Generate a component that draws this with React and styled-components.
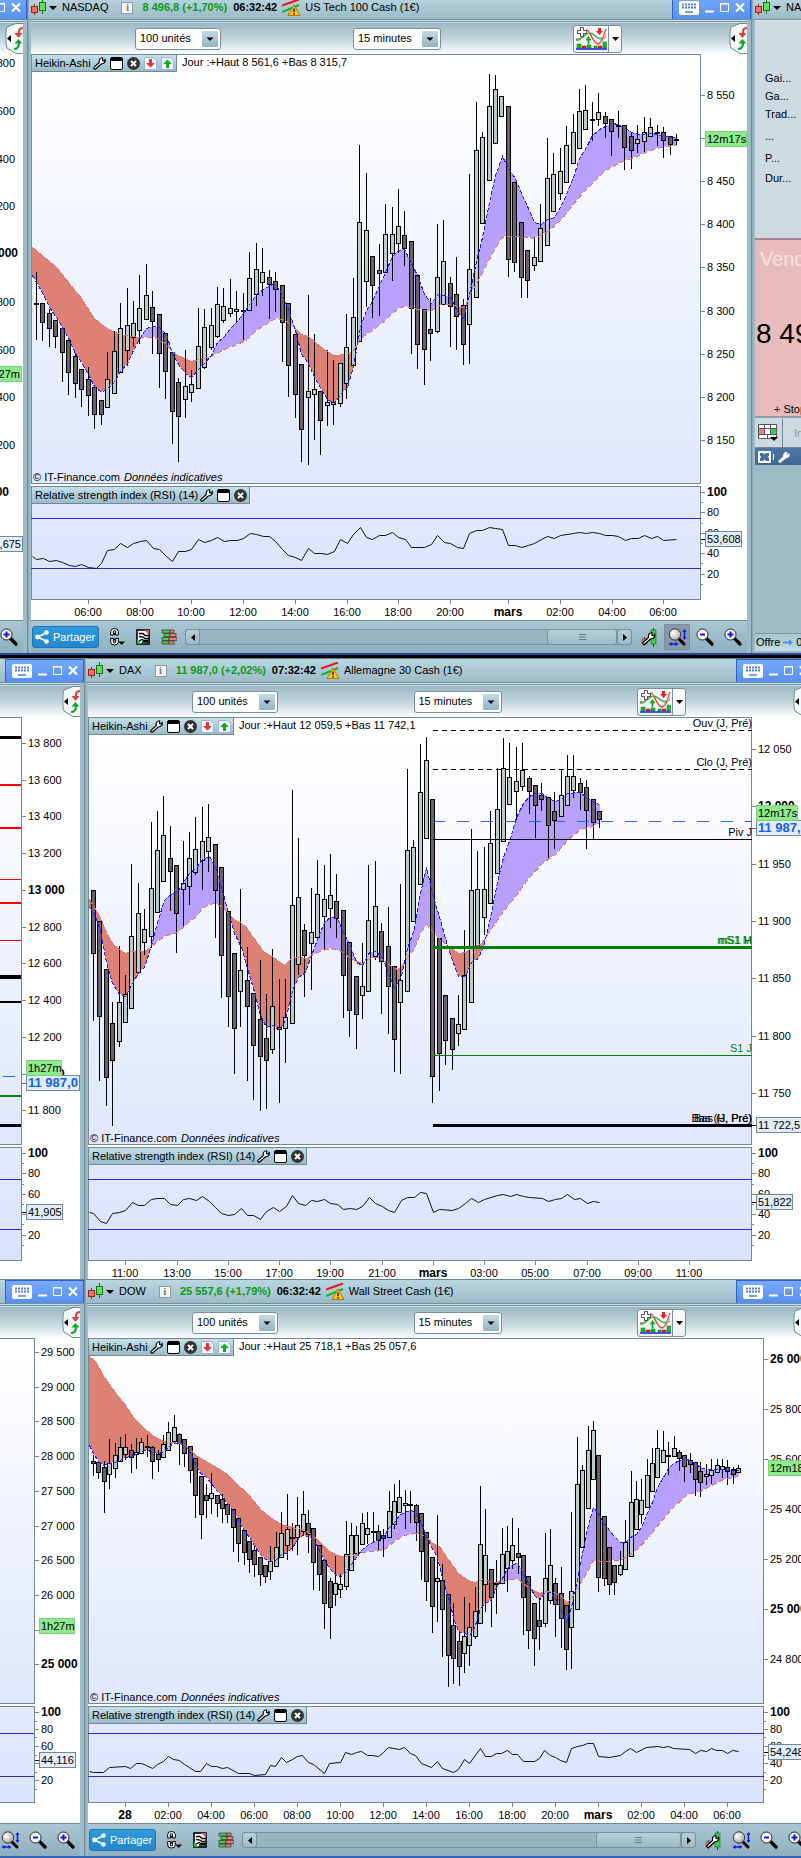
import React from 'react';
import styled, { createGlobalStyle, css } from 'styled-components';

const GlobalStyle = createGlobalStyle`
  *, *::before, *::after { box-sizing: border-box; }
  body { margin: 0; background: #fff; }
  body, button, select { font: 11px/13px "Liberation Sans", Arial, sans-serif; color: #000; }
  svg { display: block; flex: none; }
  svg text { font-family: "Liberation Sans", Arial, sans-serif; font-size: 11px; }
  svg text.major { font-size: 12px; font-weight: 700; }
`;

const c = {
  frame: '#728993',
  bar: '#9dbac7',
  barLight: '#b9d7e2',
  level: '#2a2ad6',
  up: '#bccac8',
  down: '#6b6069',
  cloudUp: '#b8a0ff',
  cloudDown: '#dc8174',
};

/* ---------- chart data: drawn in thirds of a pixel ---------- */

const nasdaq = {
  ux: 93, uy: -558, x0: 109, step: 19.394,
  candles: `d96 190 193 299|d190 190 247 302|d207 220 265 320|d240 241 290 322|d262 265 338 425|d301 301 398 464|d340 349 431 473|d388 388 448 500|d382 418 466 527|d436 442 523 566|d480 481 523 554|l337 418 502 503|l274 334 460 461|l190 265 398 398|l145 256 331 376|l184 250 293 318|l106 205 271 311|l73 166 238 239|d154 202 244 341|d223 223 340 443|d280 281 395 476|d337 337 514 611|d415 427 530 665|l331 438 479 533|l391 433 458 485|l205 319 445 446|l208 262 383 384|l205 256 323 328|l142 193 290 291|l145 199 242 248|l118 205 220 229|l154 208 214 244|d160 211 213 299|l37 115 211 212|l10 88 163 197|l25 97 127 166|d91 112 133 236|d97 124 148 215|d136 136 247 365|d190 190 376 470|d283 283 463 533|d373 373 568 665|l166 454 472 673|l283 448 463 599|d454 454 542 644|l331 487 497 557|l361 487 493 554|l370 370 490 500|l223 322 430 476|l115 232 376 377|l-285 -53 304 305|l-200 -28 124 200|d49 49 136 233|d13 91 101 226|l-107 -17 97 98|l-98 -17 40 122|l-152 -41 10 38|d-87 -14 25 76|d4 4 206 341|d106 106 314 386|d208 208 328 434|d175 268 280 362|l-48 112 275 276|l-60 64 193 194|d112 130 199 320|d52 163 230 329|d178 196 314 374|l-198 88 253 371|l-413 -269 172 173|l-324 -308 -50 -49|l-498 -401 -179 -178|l-495 -452 -290 -290|l-431 -431 -371 -371|d-401 -401 58 109|d-173 -173 67 95|d-53 -53 112 173|d31 31 121 173|l-8 52 76 92|l-108 -35 64 65|l-306 -185 16 17|l-261 -197 -86 -86|l-276 -206 -140 -123|l-342 -284 -173 -173|l-378 -323 -230 -230|l-451 -386 -275 -275|l-465 -389 -332 -332|d-414 -362 -359 -300|l-440 -383 -361 -344|d-384 -371 -350 -309|d-362 -362 -326 -255|d-387 -344 -341 -309|d-344 -344 -278 -213|d-321 -311 -269 -216|l-345 -302 -290 -264|l-369 -323 -296 -267|l-366 -338 -311 -311|d-345 -323 -320 -285|d-339 -323 -299 -249|d-312 -311 -287 -258|d-318 -302 -299 -288`,
  fast: '96,105 109,125 130,163 148,202 169,232 187,262 208,300 226,338 244,365 265,403 283,437 303,455 322,443 343,425 361,392 382,370 400,330 421,292 439,265 460,259 478,262 499,283 517,340 535,372 556,398 572,410 595,388 613,370 634,345 652,305 673,288 691,265 712,243 730,220 751,190 769,163 790,146 815,133 830,140 847,165 865,208 886,270 904,342 925,370 943,410 964,448 982,478 1003,490 1021,463 1042,440 1060,378 1081,262 1099,210 1117,184 1138,135 1156,95 1177,48 1195,30 1213,28 1234,70 1255,110 1273,163 1294,188 1315,162 1333,164 1351,172 1372,212 1390,236 1408,163 1429,62 1447,-10 1468,-115 1486,-195 1507,-253 1525,-215 1546,-185 1564,-140 1585,-95 1603,-55 1624,-47 1642,-63 1663,-70 1681,-100 1699,-137 1720,-190 1738,-245 1759,-280 1777,-315 1798,-332 1816,-341 1837,-350 1855,-348 1876,-335 1894,-325 1915,-317 1954,-320 1972,-317 1990,-311 2029,-308',
  slow: '96,22 130,48 169,82 208,128 244,175 283,233 304,253 330,270 361,281 390,289 421,290 460,290 478,297 499,313 517,335 545,352 572,363 595,356 634,347 673,328 712,313 740,297 769,270 800,250 826,234 847,236 865,245 886,265 904,281 925,288 943,303 964,320 1000,345 1042,343 1060,331 1081,294 1117,271 1156,240 1177,220 1195,205 1213,197 1240,203 1290,214 1320,192 1350,192 1380,202 1395,198 1408,165 1438,115 1470,52 1500,-3 1512,-13 1545,-12 1575,-8 1603,-6 1624,-17 1642,-28 1666,-45 1685,-65 1717,-106 1750,-145 1780,-175 1810,-205 1837,-222 1870,-236 1903,-250 1945,-268 1980,-278 2029,-286',
  rsiUy: 48,
  rsi: '96,258 109,267 130,265 148,273 169,271 187,276 208,285 226,289 244,283 265,291 287,293 304,280 322,241 343,238 361,220 382,232 400,218 421,214 439,211 460,235 478,238 499,258 517,273 535,244 556,243 574,238 595,208 613,217 634,209 652,202 673,213 691,211 712,211 730,203 751,188 769,193 790,198 808,197 826,214 847,236 865,256 886,262 904,271 925,235 943,250 964,250 982,253 1003,244 1021,208 1042,219 1060,193 1081,170 1099,202 1117,207 1138,196 1156,195 1177,187 1195,202 1216,208 1234,232 1255,230 1273,232 1294,223 1312,196 1333,216 1351,220 1372,232 1390,235 1408,190 1429,181 1447,181 1468,172 1486,175 1507,176 1525,226 1546,226 1564,232 1585,226 1603,219 1624,208 1642,197 1663,205 1681,196 1720,190 1738,187 1759,190 1777,187 1798,190 1816,196 1837,194 1855,199 1876,211 1894,205 1915,205 1933,196 1954,205 1972,199 1990,211 2029,208',
};

const dax = {
  ux: 264, uy: 51, x0: 280, step: 19.215,
  candles: `d571 571 760 962|d664 664 949 1142|d808 808 1132 1217|d906 970 1081 1277|l739 907 1024 1040|l826 883 967 968|l492 709 925 926|l549 640 817 818|l627 688 727 762|l366 565 709 742|l333 451 637 638|l288 406 544 545|d378 475 514 630|d496 496 640 756|l424 550 568 677|l397 475 559 612|l352 448 517 522|l321 424 481 567|l312 412 454 513|d433 433 571 713|d502 502 766 893|d634 634 889 980|d760 760 985 1121|l568 811 874 980|d742 841 919 1142|d880 880 1036 1199|d780 958 1069 1232|d883 1015 1081 1226|l748 919 1048 1061|d838 982 988 1208|l838 952 985 1088|l270 616 970 971|l414 592 793 824|d673 691 766 890|l564 697 730 869|l480 583 712 714|l495 598 649 745|l462 586 625 681|d522 604 655 713|d631 631 826 953|d727 727 931 1010|d829 829 943 1046|l730 859 886 956|l495 661 874 875|l484 619 769 779|d670 694 784 941|d622 739 859 1001|d799 799 1018 1115|l552 841 907 1121|l207 451 874 875|l420 442 664 665|l132 277 553 554|l111 181 415 416|d298 298 1129 1208|d715 715 1060 1172|d886 886 1021 1094|d955 955 1048 1109|l886 973 1000 1037|l690 826 988 988|l387 571 907 908|l453 568 738 739|l441 568 653 702|l333 430 610 611|l205 328 520 521|l114 205 424 425|l129 232 313 314|l141 244 274 357|l129 211 259 272|d228 235 274 341|d256 256 316 413|d249 286 298 332|d292 292 376 473|d276 334 361 446|l208 286 349 349|l165 229 316 317|l165 229 271 293|d234 250 277 329|d240 262 331 446|d298 298 367 418|d334 334 358 382`,
  fast: '267,620 280,632 301,690 319,785 337,850 358,882 376,888 397,850 415,820 433,800 454,735 472,665 493,600 511,583 532,577 550,545 568,518 589,500 607,478 628,468 646,500 664,560 685,635 703,700 724,740 742,805 760,865 781,945 799,982 820,975 838,990 856,960 877,870 895,832 916,815 934,765 952,718 973,665 991,652 1012,655 1030,695 1051,735 1069,785 1087,795 1108,755 1126,753 1147,770 1165,820 1183,865 1204,828 1222,745 1243,685 1261,580 1279,500 1300,590 1320,660 1340,735 1357,780 1375,828 1396,828 1414,785 1435,773 1453,730 1471,650 1492,545 1510,470 1531,415 1549,350 1570,310 1588,288 1606,280 1627,278 1645,295 1666,302 1684,297 1702,280 1741,277 1762,295 1780,305 1798,312',
  slow: '267,597 301,650 319,697 337,730 358,748 376,759 397,754 433,754 451,742 472,722 493,707 532,695 568,662 589,648 607,625 628,611 646,608 664,618 685,640 703,657 724,668 742,685 760,712 790,753 820,772 852,795 877,772 895,770 920,774 934,765 965,750 991,744 1015,749 1030,757 1051,775 1087,790 1108,775 1130,770 1147,778 1165,793 1190,807 1204,797 1222,770 1243,745 1261,700 1279,672 1300,695 1318,713 1340,735 1375,760 1396,757 1414,740 1440,733 1453,717 1471,690 1510,632 1549,585 1588,530 1627,490 1666,462 1702,420 1741,388 1780,378 1798,366',
  rsiUy: 51,
  rsi: '267,246 280,249 301,273 319,280 337,249 358,247 376,241 397,217 415,226 433,226 454,208 472,205 493,205 511,222 532,226 550,208 568,205 589,211 607,199 628,213 646,232 664,250 685,256 703,253 724,235 742,256 760,256 781,268 799,244 820,232 838,244 858,227 877,196 895,220 916,226 934,211 952,213 973,208 991,220 1012,223 1030,238 1051,235 1069,238 1087,229 1108,202 1126,220 1147,229 1165,241 1183,247 1204,211 1222,202 1243,202 1261,187 1279,190 1300,246 1318,238 1357,241 1375,235 1396,220 1414,205 1435,217 1453,208 1492,196 1510,193 1531,199 1549,193 1570,199 1588,202 1627,205 1645,214 1666,208 1684,203 1702,193 1723,208 1741,205 1762,220 1780,214 1798,217',
};

const dow = {
  ux: 264, uy: -6, x0: 280, step: 16.125,
  candles: `d346 364 370 405|d367 367 397 414|d363 382 424 516|l297 370 403 446|l309 346 385 411|l291 322 364 365|l282 322 343 358|d312 331 352 396|l294 337 343 384|l294 307 340 341|d285 319 322 350|d318 322 364 414|d330 343 358 393|l285 313 352 353|l246 277 331 332|l225 262 304 305|d280 283 310 372|d297 297 340 378|d319 319 391 426|d355 355 466 533|d409 409 523 594|d432 466 481 531|l399 460 475 519|d466 466 490 528|d463 478 505 548|d493 493 523 546|d507 508 562 635|d535 535 610 665|d570 571 637 674|d603 604 658 698|d618 631 673 710|d651 652 703 735|d675 676 709 726|l618 664 694 717|l576 622 679 680|l516 580 652 653|l462 568 616 659|d549 591 593 632|l471 556 592 643|l453 523 574 584|d510 550 583 636|d565 565 667 749|d615 616 703 752|d660 661 790 864|d714 724 802 896|l648 730 763 797|l702 733 748 773|l543 643 739 747|l549 586 691 692|l558 586 640 641|l519 550 613 614|l516 565 583 611|d516 573 577 602|d555 574 601 632|d567 586 595 650|l453 514 592 593|l432 484 553 566|l420 472 517 518|l450 490 496 564|d453 493 495 548|d493 495 547 602|d520 520 634 717|d577 577 724 780|d652 652 799 878|l525 715 724 843|d672 721 808 950|d763 763 946 1040|d789 856 955 1031|d873 904 979 1037|l771 889 940 998|l789 862 916 977|l741 814 889 896|l438 613 850 851|l507 646 733 815|d688 688 772 860|d660 729 731 821|l564 643 730 731|l558 634 685 755|l534 616 661 684|d564 640 652 701|d646 646 772 884|d709 709 871 926|d790 790 895 977|d774 841 859 929|l579 715 850 858|l567 676 781 791|d715 730 793 890|d682 760 835 923|d796 796 928 989|l516 754 862 986|l291 433 808 809|l375 391 622 623|l258 331 505 506|l243 271 418 419|d346 346 712 755|d529 529 715 737|d622 622 733 764|d676 676 727 764|l633 676 703 707|l540 607 688 689|l393 487 649 650|l423 478 568 569|l417 481 523 551|l357 406 502 503|l324 370 454 455|l270 325 412 413|l273 331 367 368|d306 346 349 404|l288 325 349 350|d330 337 355 392|d346 346 379 425|d339 361 373 398|d367 367 418 467|d366 394 427 470|l373 403 409 434|l357 391 406 431|l357 376 397 398|l357 379 388 411|d360 382 395 434|d383 388 403 431|l375 385 397 398`,
  fast: '267,316 280,340 295,363 310,375 328,370 343,367 361,360 376,350 391,348 409,342 424,334 439,330 457,334 472,338 490,335 505,320 520,310 538,310 553,314 568,330 586,372 601,400 619,412 634,430 649,450 667,468 682,490 697,508 715,540 730,568 748,590 763,615 778,640 796,658 811,664 826,660 844,643 859,638 877,620 892,600 907,585 925,587 940,600 955,625 973,660 988,685 1006,702 1021,711 1036,695 1054,672 1069,650 1084,630 1102,615 1117,605 1135,598 1150,590 1165,565 1183,545 1198,525 1213,515 1231,511 1246,515 1264,545 1279,585 1294,620 1312,650 1327,715 1345,770 1360,830 1375,874 1393,880 1408,886 1423,865 1441,805 1456,790 1474,778 1489,740 1504,720 1522,685 1537,672 1552,670 1570,700 1585,730 1603,765 1618,780 1633,760 1651,757 1666,775 1681,800 1699,842 1714,800 1732,720 1747,640 1762,565 1780,500 1795,518 1810,545 1828,570 1843,588 1861,605 1876,607 1891,590 1909,583 1924,560 1939,525 1957,485 1972,440 1990,410 2005,385 2020,368 2038,360 2060,357 2086,370 2101,382 2119,388 2149,388 2167,387 2182,390 2215,391',
  slow: '267,47 285,62 313,110 345,157 378,198 400,232 430,262 457,285 490,302 520,307 553,313 568,328 590,347 619,362 649,381 682,403 715,435 748,465 780,507 811,532 844,552 877,562 907,567 925,575 955,600 988,632 1021,649 1060,645 1084,635 1117,634 1150,630 1183,602 1213,586 1246,580 1279,588 1297,610 1320,620 1345,658 1375,700 1398,718 1423,727 1450,716 1480,725 1510,722 1537,716 1555,717 1585,740 1618,760 1635,752 1660,756 1681,765 1702,786 1714,775 1732,740 1747,720 1780,661 1810,662 1861,660 1885,645 1915,625 1945,590 1980,547 2020,502 2060,463 2100,452 2140,433 2170,417 2215,408',
  rsiUy: 98,
  rsi: '267,293 280,297 310,297 328,282 376,279 391,285 409,270 424,270 439,276 457,283 472,271 490,262 505,249 520,257 538,261 553,272 568,280 586,294 601,294 619,270 634,279 649,279 667,284 682,282 715,300 748,300 763,306 796,303 811,276 826,279 844,252 859,267 877,258 892,249 907,246 925,267 940,273 973,298 988,270 1021,267 1036,237 1054,243 1069,237 1084,234 1102,245 1117,244 1135,249 1150,237 1165,222 1198,226 1213,221 1231,240 1246,246 1264,270 1294,282 1312,262 1327,285 1360,297 1375,288 1393,258 1408,268 1441,223 1456,249 1474,249 1489,240 1504,240 1522,231 1537,243 1552,241 1570,264 1603,264 1618,255 1633,231 1651,246 1666,252 1681,261 1699,267 1714,225 1732,219 1747,216 1762,210 1780,210 1795,249 1828,252 1861,246 1876,234 1891,225 1909,235 1939,222 1972,219 1990,222 2005,219 2020,223 2068,227 2086,238 2101,231 2119,234 2134,225 2149,231 2167,229 2182,238 2197,231 2215,234',
};

/* ---------- window frames ---------- */

const Desktop = styled.main`
  display: flex;
  flex-direction: column;
  width: 100%;
  overflow: hidden;
`;

const Row = styled.section`
  display: flex;
  margin-top: ${(p) => (p.$cut ? '-5px' : 0)};
`;

const Taskline = styled.div`
  height: ${(p) => (p.$last ? 2 : 5)}px;
  background: ${(p) => (p.$last ? '#3563b8' : 'linear-gradient(#23479a 2px, #000 2px)')};
`;

const Splitter = styled.div`
  flex: none;
  width: 2px;
  background: linear-gradient(90deg, #6f8b98 1px, #8ea9b6 1px);
`;

const Frame = styled.article`
  display: flex;
  flex-direction: column;
  min-width: 0;
  position: relative;
  ${(p) => (p.$width ? css`flex: none; width: ${p.$width}px;` : css`flex: 1;`)}
  margin-right: ${(p) => (p.$runsOut ? '-14px' : 0)};
`;

const Body = styled.div`
  display: flex;
  flex-direction: column;
  flex: 1;
  background: #fff;
  border: solid ${c.bar};
  border-width: 0 4px 0 ${(p) => (p.$strip ? 0 : 2)}px;
`;

const TitleBar = styled.header`
  display: flex;
  align-items: center;
  height: 25px;
  overflow: hidden;
  white-space: nowrap;
  border-top: 1px solid #64808e;
  border-bottom: 1px solid #7490a0;
  padding-left: ${(p) => (p.$strip ? 0 : 2)}px;
  background: linear-gradient(${c.barLight}, ${c.bar});
`;

const StripControls = styled.div`
  display: flex;
  justify-content: flex-end;
  flex: 1;
  min-width: 0;
`;

const IconButton = styled.button`
  display: flex;
  align-items: center;
  justify-content: center;
  flex: none;
  padding: 0;
  border: 0;
  background: none;
  width: ${(p) => (p.$w ? `${p.$w}px` : 'auto')};
`;

const SymbolName = styled.h2`
  margin: 0 13px 0 4px;
  font-size: 11px;
  font-weight: 400;
`;

const InfoButton = styled.button`
  width: 12px;
  height: 12px;
  padding: 0;
  margin-right: 9px;
  border: 1px solid #8e9aa0;
  background: #f2f4f5;
  color: #7a8084;
  font: 700 11px/9px "Liberation Serif", serif;
`;

const Price = styled.strong`
  color: #0b9a1b;
  margin-right: 6px;
`;

const Clock = styled.time`
  font-weight: 700;
  margin-right: 5px;
`;

const FullName = styled.span`
  margin-left: 5px;
`;

const Controls = styled.div`
  display: flex;
  align-items: center;
  gap: 6px;
  flex: none;
  width: 79px;
  height: 24px;
  margin-left: auto;
  padding-left: 6px;
  border: 1px solid #2d62c6;
  background: linear-gradient(#75a9fc, #5890f0);
`;

const Groove = styled.div`
  height: 3px;
  background: linear-gradient(#c4dbe5 1px, #7e98a5 1px, #7e98a5 2px, #c4dbe5 2px);
`;

const Toolbar = styled.div`
  display: flex;
  justify-content: space-between;
  align-items: center;
  height: 31px;
  position: relative;
  padding: ${(p) => (p.$strip ? 0 : '0 125px 0 104px')};
  background: linear-gradient(#9bb8c4, #c6d7de 55%, #fbfdfd);
`;

const DrawerTab = styled.div`
  position: absolute;
  right: 0;
  top: 0;
`;

const SelectBox = styled.label`
  position: relative;
  width: ${(p) => p.$w}px;
  height: 22px;
  select {
    width: 100%;
    height: 22px;
    padding: 0 20px 0 4px;
    border: 1px solid #78909c;
    border-radius: 3px;
    background: #fff;
    appearance: none;
  }
  svg {
    position: absolute;
    top: 3px;
    right: 3px;
    pointer-events: none;
  }
`;

const SplitButton = styled.div`
  display: flex;
  width: 49px;
  height: 28px;
  border: 1px solid #78909c;
  border-radius: 3px;
  background: linear-gradient(#fff, #eef2f4);
  button + button { border-left: 1px solid #78909c; flex: 1; }
`;

/* ---------- chart frames ---------- */

const ChartLine = styled.div`
  display: flex;
  height: ${(p) => p.$h}px;
  margin-bottom: ${(p) => (p.$gap ? 2 : 0)}px;
`;

const Plot = styled.div`
  position: relative;
  flex: 1;
  min-width: 0;
  outline: 1px solid ${c.frame};
  outline-offset: -1px;
  background: ${(p) => (p.$rsi ? 'linear-gradient(#e3eafe, #dae3fd)' : 'linear-gradient(#fff 5%, #dfe7fd)')};
  > svg { position: absolute; inset: 0; }
`;

const StripPlot = styled.div`
  flex: none;
  width: ${(p) => p.$w}px;
  border: solid ${c.frame};
  border-width: ${(p) => (p.$w ? '1px 1px 1px 0' : 0)};
  background: ${(p) => (p.$rsi ? 'linear-gradient(#e3eafe, #dae3fd)' : 'linear-gradient(#fff 5%, #dfe7fd)')};
`;

const AxisBox = styled.div`
  flex: none;
  width: ${(p) => p.$w}px;
  overflow: hidden;
`;

const TimeLine = styled.div`
  height: ${(p) => p.$h}px;
  border-bottom: ${(p) => (p.$line ? `1px solid ${c.frame}` : 0)};
`;

const Chip = styled.div`
  position: absolute;
  top: 0;
  left: 0;
  display: flex;
  align-items: center;
  gap: 4px;
  height: 18px;
  padding: 0 2px 0 3px;
  white-space: nowrap;
  border: 1px solid ${c.frame};
  background: linear-gradient(#c3e0eb, #9cbbc8);
  span { margin-right: -2px; }
`;

const DayRange = styled.div`
  position: absolute;
  top: 2px;
  left: 151px;
  white-space: nowrap;
`;

const Credit = styled.div`
  position: absolute;
  left: 2px;
  bottom: 0;
  white-space: nowrap;
  em { margin-left: 4px; }
`;

/* ---------- bottom bar ---------- */

const BottomBar = styled.footer`
  display: flex;
  align-items: center;
  justify-content: ${(p) => (p.$strip ? 'flex-end' : 'flex-start')};
  gap: 11px;
  height: 32px;
  padding: 0 6px 0 1px;
  overflow: hidden;
  background: linear-gradient(#a9c7d3, #8fafbe);
`;

const ShareButton = styled.button`
  display: flex;
  align-items: center;
  gap: 4px;
  flex: none;
  width: 67px;
  height: 22px;
  padding: 0 2px;
  border: 1px solid #1b76b8;
  border-radius: 3px;
  background: linear-gradient(#2f9ade, #2287cd);
  color: #fff;
`;

const Scroller = styled.div`
  display: flex;
  flex: 1;
  min-width: 0;
  height: 16px;
  margin: 0 -3px;
  border: 1px solid #78939f;
  background: #97b5c1;
  border-radius: 3px;
`;

const ScrollTrack = styled.div`
  flex: 1;
`;

const ScrollButton = styled.button`
  display: flex;
  align-items: center;
  justify-content: center;
  flex: none;
  width: ${(p) => p.$w}px;
  padding: 0;
  border: 1px solid #78939f;
  border-radius: 3px;
  margin: -1px;
  margin-right: ${(p) => (p.$thumb ? '1px' : '-1px')};
  background: linear-gradient(#b5d0da, #9dbac6);
`;

const ToolButton = styled.button`
  display: flex;
  align-items: center;
  justify-content: center;
  flex: none;
  width: 26px;
  height: 26px;
  margin: 0 -5px 0 -4px;
  padding: 0;
  border: 1px solid ${(p) => (p.$on ? '#7d8f99' : 'transparent')};
  background: ${(p) => (p.$on ? '#8799a4' : 'none')};
`;

/* ---------- order panel ---------- */

const Panel = styled.aside`
  display: flex;
  flex-direction: column;
  flex: none;
  width: 48px;
  overflow: hidden;
  white-space: nowrap;
  background: ${c.bar};
`;

const PanelStats = styled.div`
  height: 218px;
  margin-left: 2px;
  padding: 51px 0 0 10px;
  background: #cddae1;
  border-top: 1px solid #e3ebef;
  p { margin: 0 0 5px; }
  p.gap { margin-top: 9px; }
  p.last { margin-top: 7px; }
`;

const SellBox = styled.div`
  display: flex;
  flex-direction: column;
  align-items: flex-start;
  height: 180px;
  margin-left: 2px;
  padding: 8px 0 0 1px;
  border-top: 2px solid #a8868c;
  border-bottom: 2px solid #8f9fa8;
  background: #e8bcbc;
  span { font-size: 20px; line-height: 22px; color: #f6e2e2; margin-left: 4px; }
  strong { font-weight: 400; font-size: 28px; line-height: 28px; margin-top: 50px; }
  small { font-size: 11px; line-height: 13px; margin: 55px 0 0 18px; }
`;

const PanelTools = styled.div`
  display: flex;
  align-items: center;
  height: 30px;
  margin-left: 2px;
  background: #cddae1;
  border-bottom: 1px solid ${c.frame};
  color: #8b979e;
  svg { margin: 0 4px 0 3px; }
  span { height: 28px; padding: 8px 0 0 11px; border-left: 1px solid ${c.frame}; }
`;

const PanelHead = styled.div`
  display: flex;
  align-items: center;
  gap: 4px;
  height: 17px;
  margin-left: 2px;
  padding-left: 3px;
  background: linear-gradient(#4d77a6, #3f6695);
`;

const Offer = styled.div`
  display: flex;
  align-items: center;
  gap: 3px;
  height: 18px;
  margin: auto 0 2px 2px;
  padding-left: 1px;
  background: linear-gradient(#a6c4d0, #c3dbe5);
  border-top: 1px solid #8199a5;
`;

/* ---------- icons ---------- */

const CandleIcon = () => (
  <svg width="16" height="17" viewBox="0 0 16 17">
    <path d="M3.500 5v11" stroke="#a02020" />
    <rect x="0.500" y="7.500" width="6" height="6" fill="#ee6f6f" stroke="#a02020" />
    <path d="M11.500 0v15" stroke="#0a7a14" />
    <rect x="8.500" y="3.500" width="6" height="8" fill="#66dd55" stroke="#0a7a14" />
  </svg>
);
const Caret = ({ w = 7 }) => (
  <svg width={w} height="4" viewBox="0 0 8 4" preserveAspectRatio="none"><path d="M0 0h8L4 4z" /></svg>
);
const WarnIcon = () => (
  <svg width="18" height="17" viewBox="0 0 18 17">
    <path d="M0 6.500L17 0.500" stroke="#f01414" strokeWidth="2" />
    <path d="M0 13L17 6" stroke="#12b32a" strokeWidth="2" />
    <path d="M12 6l6 10.500H6z" fill="#ffc524" stroke="#b07800" strokeLinejoin="round" />
    <path d="M12 9.500v3.500M12 14v1.500" stroke="#3b2a00" strokeWidth="1.600" />
  </svg>
);
const KeyboardIcon = () => (
  <svg width="20" height="14" viewBox="0 0 20 14">
    <rect width="20" height="14" rx="2" fill="#fff" />
    <path d="M3 3.500h14M3 6.500h14" stroke="#4a7fe0" strokeWidth="2" strokeDasharray="2 1" />
    <path d="M6 11h8" stroke="#4a7fe0" strokeWidth="1.500" />
  </svg>
);
const MinIcon = () => <svg width="9" height="11"><path d="M0 9.500h9" stroke="#fff" strokeWidth="2" /></svg>;
const MaxIcon = () => (
  <svg width="9" height="11"><path d="M.5 1.500h8v8h-8zM0 2h9" fill="none" stroke="#fff" /></svg>
);
const CloseIcon = () => (
  <svg width="10" height="11"><path d="M1 1.500l8 8M9 1.500l-8 8" stroke="#fff" strokeWidth="2" /></svg>
);
const TabIcon = () => (
  <svg width="18" height="31" viewBox="0 0 18 31">
    <path d="M18 .5H11L2 4C.5 8 .5 22 2 25l9 5.500h7" fill="#f4f8fa" stroke="#728993" />
    <path d="M6 12v7l-4-3.500z" />
    <path d="M18 5c-4 0-4 2-4 6" fill="none" stroke="#e24040" strokeWidth="2.200" />
    <path d="M9.500 10h8L13.500 15z" fill="#e24040" />
    <path d="M9 26c4 0 5-2 5-6" fill="none" stroke="#11a522" strokeWidth="2.200" />
    <path d="M9.500 20.500h8L13.500 16z" fill="#11a522" />
  </svg>
);
const ArrowBox = () => (
  <svg width="16" height="16" viewBox="0 0 16 16">
    <defs>
      <linearGradient id="arrowBox" x1="0" y1="0" x2="0" y2="1">
        <stop offset="0" stopColor="#c0dce6" /><stop offset="1" stopColor="#94b3c0" />
      </linearGradient>
    </defs>
    <rect width="16" height="16" rx="1" fill="url(#arrowBox)" />
    <path d="M4.500 6.500h7L8 10z" />
  </svg>
);
const IndicatorIcon = () => (
  <svg width="32" height="23" viewBox="0 0 32 23">
    <path d="M1 12C6 14 8 8 12 3c4 2 6 14 11 14 4-1 6-8 8-15" fill="none" stroke="#d9403c" strokeWidth="1.500" />
    <path d="M1 13c6 1 8-7 14-7 6 1 7 9 16 4" fill="none" stroke="#3cb34a" strokeWidth="1.500" />
    <path d="M12 3C8 8 6 14 1 13c6 0 8-8 14-7zM23 17c4-1 6-8 8-15v8c-4 2-5 4-8 7z" fill="#f5b5b0" />
    <path d="M5.500.5h3v3h3v3h-3v3h-3v-3h-3v-3h3z" fill="#fff" stroke="#4a4f53" />
    <path d="M13 17v-4h-2l2.500-3.500L16 13h-2v4z" fill="#0dbb18" stroke="#0a8c12" strokeWidth=".6" />
    <path d="M23 1h3v3h2l-3.500 4L21 4h2z" fill="#ee2222" />
    <path d="M2 17h4v4H2zM12 18h4v3h-4zM19 19h3v2h-3zM28 15h3.500v6H28z" fill="#0fbe1e" stroke="#0a6f10" strokeWidth=".5" />
    <path d="M7 19h4v2H7zM23 19h4v2h-4z" fill="#e32a2a" stroke="#801010" strokeWidth=".5" />
    <path d="M1 22h31" stroke="#1b1be0" strokeWidth="1.500" />
  </svg>
);
const WrenchPath = ({ fill = '#fff', stroke = '#000' }) => (
  <path
    d="M1 11.500L6.500 6.500C6 3.500 7.500 1.500 10 1.500v3l2.500.5V3c1 2.500-.5 5-4 5L3 13c-1 1-3-.5-2-1.500z"
    fill={fill} stroke={stroke} strokeWidth="1.200" strokeLinejoin="round"
  />
);
const WrenchIcon = () => <svg width="13" height="14" viewBox="0 0 13.500 14"><WrenchPath /></svg>;
const WindowIcon = () => (
  <svg width="13" height="13"><rect x=".5" y=".5" width="12" height="12" rx="1.500" fill="#fff" stroke="#000" /><path d="M1 1h11v3H1z" /></svg>
);
const DiscCloseIcon = () => (
  <svg width="13" height="13" viewBox="0 0 13 13">
    <circle cx="6.500" cy="6.500" r="6.500" fill="#333" />
    <path d="M4 4l5 5M9 4L4 9" stroke="#fff" strokeWidth="2" />
  </svg>
);
const PageArrow = ({ down }) => (
  <svg width="13" height="13" viewBox="0 0 13 13">
    <path d="M.5.5h9l3 3v9H.5z" fill="#f3f7fd" stroke="#9eb4cc" />
    <path
      d={down ? 'M5 2h3v4h3l-4.500 4.500L2 6h3z' : 'M5 11h3V7h3L6.500 2.500 2 7h3z'}
      fill={down ? '#e53535' : '#12ad1c'}
    />
  </svg>
);
const ShareIcon = () => (
  <svg width="14" height="14" viewBox="0 0 14 14">
    <path d="M12 2.500L2.500 7l9.500 4.500" fill="none" stroke="#fff" strokeWidth="1.500" />
    <circle cx="11.500" cy="2.500" r="2.300" fill="#fff" /><circle cx="2.500" cy="7" r="2.400" fill="#fff" /><circle cx="11.500" cy="11.500" r="2.300" fill="#fff" />
  </svg>
);
const ChainIcon = () => (
  <svg width="15" height="18" viewBox="0 0 15 18">
    <path d="M.7 7V3.500a3.800 3 0 017.600 0V7H5.700V3.800a1.200 1.200 0 00-2.400 0V7z" fill="#fff" stroke="#000" />
    <path d="M.7 10.500v3.500a3.800 3 0 007.600 0v-3.500H5.700v3.200a1.200 1.200 0 01-2.400 0v-3.200z" fill="#fff" stroke="#000" />
    <path d="M4.500 5v2M4.500 10.500v2" stroke="#000" />
    <path d="M8.500 13.500H15L11.700 17z" />
  </svg>
);
const NotesIcon = () => (
  <svg width="14" height="16" viewBox="0 0 14 16">
    <rect x="1" y="1" width="12" height="14" fill="#fff" stroke="#000" strokeWidth="1.600" />
    <path d="M8 1h5v5z" fill="#e45b5b" /><path d="M1 15v-5l5 5z" fill="#34b43c" />
    <path d="M3 4.500h4l2 2h3M3 7.500l4 .5 2 1.500h3M3 12l3-1.500 2 1h4M6 13h6" stroke="#000" fill="none" strokeWidth="1.300" />
  </svg>
);
const BookIcon = () => (
  <svg width="16" height="16" viewBox="0 0 16 16">
    <g stroke="#4d3a35" strokeWidth=".8">
      <path d="M1 1h8v3H1zM3 4.500h6v3H3zM1 8.500h7v3H1zM1 12h7v3H1z" fill="#43cf4b" />
      <path d="M9 1h4v3H9zM9 4.500h6v3H9zM8 8.500h8v3H8zM8 12h5v3H8z" fill="#ee7b78" />
    </g>
  </svg>
);
const ArrowLeft = ({ right }) => (
  <svg width="4" height="7"><path d={right ? 'M0 0v7l4-3.500z' : 'M4 0v7L0 3.500z'} /></svg>
);
const GripIcon = () => <svg width="7" height="6"><path d="M0 .5h7M0 3h7M0 5.500h7" stroke="#64808d" /></svg>;
const ChartToolIcon = () => (
  <svg width="16" height="19" viewBox="0 0 16 19">
    <path d="M3.500 9v9M12.500 0v19" stroke="#333" /><rect x="1" y="11" width="5" height="5" fill="#ef7f78" stroke="#444" strokeWidth=".6" />
    <rect x="10" y="2" width="5" height="14" fill="#3fce44" stroke="#0a6c10" strokeWidth=".6" />
    <g transform="translate(1 3)"><WrenchPath /></g>
  </svg>
);
const Lens = ({ children }) => (
  <svg width="18" height="18" viewBox="0 0 18 18">
    <path d="M10 10l6 6" stroke="#000" strokeWidth="3.200" strokeLinecap="round" />
    <circle cx="6.500" cy="6.500" r="5.500" fill="#f4f6fb" stroke="#222" />
    {children}
  </svg>
);
const FitIcon = () => (
  <svg width="19" height="19" viewBox="0 0 19 19">
    <defs>
      <radialGradient id="lens" cx=".35" cy=".35" r=".8"><stop offset="0" stopColor="#fff" /><stop offset="1" stopColor="#9a9a9a" /></radialGradient>
    </defs>
    <path d="M10 10l6 6" stroke="#000" strokeWidth="3" strokeLinecap="round" />
    <circle cx="7" cy="6.500" r="5.700" fill="url(#lens)" stroke="#333" />
    <path d="M16.500 2v8M3 16h5" stroke="#1414f0" strokeWidth="1.500" />
    <path d="M14.500 4l2-3 2 3zM14.500 9l2 3 2-3zM3.500 14v4L.5 16zM7.500 14v4l3-2z" fill="#1414f0" />
  </svg>
);

/* ---------- chart drawing ---------- */

const points = (text) => text.split(' ').map((p) => p.split(',').map(Number));

function project(text, ux, uy) {
  return points(text).map(([x, y]) => [Math.round((x - ux) / 3), Math.round((y - uy) / 3)]);
}

function valueAt(line, x) {
  const i = line.findIndex((p) => p[0] >= x);
  if (i <= 0) return line[i === 0 ? 0 : line.length - 1][1];
  const [x1, y1] = line[i - 1];
  const [x2, y2] = line[i];
  return y1 + ((y2 - y1) * (x - x1)) / (x2 - x1);
}

function cloud(fast, slow) {
  let up = '';
  let down = '';
  const end = fast[fast.length - 1][0];
  for (let x = 1; x <= end; x += 1) {
    const a = Math.round(valueAt(fast, x));
    const b = Math.round(valueAt(slow, x));
    if (a < b) up += `M${x + 0.5} ${a}V${b}`;
    if (a > b) down += `M${x + 0.5} ${b}V${a}`;
  }
  return { up, down };
}

const poly = (line) => line.map(([x, y]) => `${x + 0.5},${y + 0.5}`).join(' ');

function PriceDrawing({ data, levels }) {
  const fast = project(data.fast, data.ux, data.uy);
  const slow = project(data.slow, data.ux, data.uy);
  const fill = cloud(fast, slow);
  const py = (v) => Math.round((v - 1 - data.uy) / 3);
  return (
    <svg width="100%" height="100%" shapeRendering="crispEdges" aria-hidden="true">
      <path d={fill.up} stroke={c.cloudUp} />
      <path d={fill.down} stroke={c.cloudDown} />
      {data.candles.split('|').map((entry, i) => {
        const [h, t, b, l] = entry.slice(1).split(' ').map(Number).map(py);
        const x = Math.round((data.x0 + i * data.step - 1 - data.ux) / 3);
        return (
          <g key={i}>
            <rect x={x} y={h} width="1" height={l - h + 1} />
            <rect x={x - 2} y={t} width="5" height={Math.max(b - t + 1, 2)} />
            {b - t > 1 && (
              <rect x={x - 1} y={t + 1} width="3" height={b - t - 1} fill={entry[0] === 'l' ? c.up : c.down} />
            )}
          </g>
        );
      })}
      <polyline points={poly(slow)} fill="none" stroke="#e2736c" strokeDasharray="5 3" />
      <polyline points={poly(fast)} fill="none" stroke="#1c1cff" strokeDasharray="4 2" />
      {levels.map((v) => (
        <React.Fragment key={v.y}>
          <line x1="345" x2="100%" y1={v.y + 0.5} y2={v.y + 0.5} stroke={v.color || '#000'} strokeWidth={v.w || 1} strokeDasharray={v.dash} />
          {(v.names || []).map((n) => (
            <text key={n} x="100%" y={v.y - 3} textAnchor="end" fill={v.color || '#000'}>{n}</text>
          ))}
        </React.Fragment>
      ))}
    </svg>
  );
}

function RsiDrawing({ data, levels }) {
  return (
    <svg width="100%" height="100%" aria-hidden="true">
      {levels.map((y) => <line key={y} x1="0" x2="100%" y1={y + 0.5} y2={y + 0.5} stroke={c.level} />)}
      {data && <polyline points={poly(project(data.rsi, data.ux, data.rsiUy))} fill="none" stroke="#111" />}
    </svg>
  );
}

/* ticks: [y, label, major]; tags: {y, text, kind, w}; end: right edge for right-aligned labels */
function Axis({ ticks, minor = [], tags = [], end }) {
  return (
    <svg width="100%" height="100%">
      {!end && minor.map((y) => <path key={y} d={`M0 ${y + 0.5}h2`} stroke={c.frame} />)}
      {ticks.map(([y, label, major]) => (
        <React.Fragment key={y}>
          {!end && <path d={`M0 ${y + 0.5}h4`} stroke={c.frame} />}
          <text x={end ? (major ? end + 3 : end) : 6} y={y + 4} textAnchor={end ? 'end' : 'start'} className={major ? 'major' : undefined}>{label}</text>
        </React.Fragment>
      ))}
      {tags.map((t) => {
        const live = t.kind === 'live';
        const blue = t.kind === 'price';
        const x = t.x === undefined ? 4 : t.x;
        return (
          <React.Fragment key={t.text}>
            {!live && x > 0 && <path d={`M0 ${t.y + 8.5}h4`} stroke={blue ? '#1a6cf0' : '#000'} />}
            <rect x={x + 0.5} y={t.y + 0.5} width={t.w - 1} height="15" fill={live ? '#8fea8d' : '#e3ecf9'} stroke={live ? '#79d477' : c.frame} />
            <text
              x={end ? x + t.w - 2 : x + 2} y={t.y + 12} textAnchor={end ? 'end' : 'start'}
              style={blue ? { fontSize: 13, fontWeight: 700, fill: '#0f62f2' } : undefined}
            >{t.text}</text>
          </React.Fragment>
        );
      })}
    </svg>
  );
}

function TimeAxis({ ticks }) {
  return (
    <svg width="100%" height="100%">
      {ticks.map(([x, label, major]) => (
        <React.Fragment key={x}>
          <path d={`M${x + 0.5} 0v4`} stroke={c.frame} />
          <text x={x} y="16" textAnchor="middle" className={major ? 'major' : undefined}>{label}</text>
        </React.Fragment>
      ))}
    </svg>
  );
}

/* ---------- shared parts ---------- */

const WindowControls = () => (
  <Controls>
    <IconButton aria-label="Clavier" $w={20}><KeyboardIcon /></IconButton>
    <IconButton aria-label="Réduire" $w={9}><MinIcon /></IconButton>
    <IconButton aria-label="Agrandir" $w={9}><MaxIcon /></IconButton>
    <IconButton aria-label="Fermer" $w={10}><CloseIcon /></IconButton>
  </Controls>
);

const Drawer = () => (
  <DrawerTab><IconButton aria-label="Ouvrir le volet"><TabIcon /></IconButton></DrawerTab>
);

const Choice = ({ label, value, w }) => (
  <SelectBox $w={w}>
    <select aria-label={label} defaultValue={value}><option>{value}</option></select>
    <ArrowBox />
  </SelectBox>
);

const ChipTools = ({ pages }) => (
  <>
    <IconButton aria-label="Configurer"><WrenchIcon /></IconButton>
    <IconButton aria-label="Fenêtre"><WindowIcon /></IconButton>
    <IconButton aria-label="Supprimer"><DiscCloseIcon /></IconButton>
    {pages && <IconButton aria-label="Descendre"><PageArrow down /></IconButton>}
    {pages && <IconButton aria-label="Monter"><PageArrow /></IconButton>}
  </>
);

const ZoomTools = ({ on }) => (
  <>
    <ToolButton aria-label="Ajuster" $on={on}><FitIcon /></ToolButton>
    <ToolButton aria-label="Dézoomer"><Lens><path d="M4 6.500h5" stroke="#1414f0" strokeWidth="2" /></Lens></ToolButton>
    <ToolButton aria-label="Zoomer"><Lens><path d="M3.500 6.500h6M6.500 3.500v6" stroke="#1414f0" strokeWidth="2" /></Lens></ToolButton>
  </>
);

function ChartWindow({ w }) {
  return (
    <Frame $runsOut={w.runsOut}>
      <TitleBar>
        <CandleIcon />
        <IconButton aria-label="Choisir une valeur" $w={11}><Caret w={8} /></IconButton>
        <SymbolName>{w.symbol}</SymbolName>
        <InfoButton aria-label="Informations">i</InfoButton>
        <Price>{w.price}</Price>
        <Clock>{w.time}</Clock>
        <WarnIcon />
        <FullName>{w.name}</FullName>
        <WindowControls />
      </TitleBar>
      <Body>
        <Groove />
        <Toolbar>
          <Choice label="Nombre d'unités" value="100 unités" w={86} />
          <Choice label="Unité de temps" value="15 minutes" w={88} />
          <SplitButton>
            <IconButton aria-label="Ajouter un indicateur" $w={34}><IndicatorIcon /></IconButton>
            <IconButton aria-label="Plus d'indicateurs"><Caret /></IconButton>
          </SplitButton>
          <Drawer />
        </Toolbar>
        <ChartLine $h={w.priceH} $gap>
          <Plot>
            <PriceDrawing data={w.data} levels={w.levels || []} />
            <Chip><span>Heikin-Ashi</span><ChipTools pages /></Chip>
            <DayRange>{w.range}</DayRange>
            <Credit>© IT-Finance.com<em>Données indicatives</em></Credit>
          </Plot>
          <AxisBox $w={w.axisW}><Axis ticks={w.ticks} tags={w.tags} /></AxisBox>
        </ChartLine>
        <ChartLine $h={w.rsiH}>
          <Plot $rsi>
            <RsiDrawing data={w.data} levels={w.rsiLevels} />
            <Chip><span>Relative strength index (RSI) (14)</span><ChipTools /></Chip>
          </Plot>
          <AxisBox $w={w.axisW}><Axis ticks={w.rsiTicks} minor={w.rsiMinor} tags={w.rsiTags} /></AxisBox>
        </ChartLine>
        <TimeLine $h={w.bar ? 21 : 18} $line={w.bar}><TimeAxis ticks={w.times} /></TimeLine>
        {w.bar && (
          <BottomBar>
            <ShareButton><ShareIcon />Partager</ShareButton>
            <IconButton aria-label="Lier" $w={15}><ChainIcon /></IconButton>
            <IconButton aria-label="Notes" $w={14}><NotesIcon /></IconButton>
            <IconButton aria-label="Carnet d'ordres" $w={16}><BookIcon /></IconButton>
            <Scroller>
              <ScrollButton $w={15} aria-label="Défiler à gauche"><ArrowLeft /></ScrollButton>
              <ScrollTrack />
              <ScrollButton $w={w.thumb} $thumb aria-label="Position"><GripIcon /></ScrollButton>
              <ScrollButton $w={15} aria-label="Défiler à droite"><ArrowLeft right /></ScrollButton>
            </Scroller>
            <ToolButton aria-label="Style du graphique"><ChartToolIcon /></ToolButton>
            <ZoomTools on={w.fitOn} />
          </BottomBar>
        )}
      </Body>
    </Frame>
  );
}

function StripWindow({ s }) {
  return (
    <Frame $width={s.width}>
      <TitleBar $strip>
        <StripControls><WindowControls /></StripControls>
      </TitleBar>
      <Body $strip>
        <Groove />
        <Toolbar $strip><Drawer /></Toolbar>
        <ChartLine $h={s.priceH} $gap>
          <StripPlot $w={s.plotW}>
            <svg width="100%" height="100%">
              {(s.lines || []).map(([y, color, w, dash]) => (
                <line key={y} x1={dash ? 3 : 0} x2={dash ? 15 : '100%'} y1={y} y2={y} stroke={color} strokeWidth={w} shapeRendering="crispEdges" />
              ))}
            </svg>
          </StripPlot>
          <AxisBox $w={s.width - 4 - s.plotW}><Axis ticks={s.ticks} tags={s.tags} end={s.end} /></AxisBox>
        </ChartLine>
        <ChartLine $h={s.rsiH}>
          <StripPlot $rsi $w={s.plotW}><RsiDrawing levels={s.rsiLevels} /></StripPlot>
          <AxisBox $w={s.width - 4 - s.plotW}><Axis ticks={s.rsiTicks} minor={s.rsiMinor} tags={s.rsiTags} end={s.rsiEnd} /></AxisBox>
        </ChartLine>
        <TimeLine $h={s.bar ? 21 : 18} $line={s.bar} />
        {s.bar && <BottomBar $strip><ZoomTools /></BottomBar>}
      </Body>
    </Frame>
  );
}

function OrderPanel() {
  return (
    <Panel>
      <TitleBar>
        <CandleIcon />
        <IconButton aria-label="Choisir une valeur" $w={11}><Caret w={8} /></IconButton>
        <SymbolName>NASDAQ</SymbolName>
      </TitleBar>
      <PanelStats>
        <p>Gai...</p><p>Ga...</p><p>Trad...</p>
        <p className="gap">...</p><p className="gap">P...</p><p className="last">Dur...</p>
      </PanelStats>
      <SellBox><span>Vendre</span><strong>8 496,8</strong><small>+ Stop</small></SellBox>
      <PanelTools>
        <svg width="20" height="17" viewBox="0 0 20 17">
          <path d="M.5.5h18v14H.5z" fill="#fff" stroke="#555" />
          <path d="M1 5h6v5H1z" fill="#f07f7f" /><path d="M13 5h5v5h-5z" fill="#40c94a" />
          <path d="M.5 4.500h18M.5 10.500h18M6.500.5v10M12.500.5v10M9.500 10v4" stroke="#555" fill="none" />
          <path d="M12 13h8l-4 4z" />
        </svg>
        <span>In</span>
      </PanelTools>
      <PanelHead>
        <svg width="16" height="12" viewBox="0 0 16 12">
          <rect x="0" y="0" width="13" height="12" rx="1" fill="#fff" />
          <path d="M2 2h3l1.500 1.500L8 2h3v3L9.500 6 11 7v3H8L6.500 8.500 5 10H2V7l1.500-1L2 5z" fill="#456f9e" />
          <path d="M15.500 3v6" stroke="#fff" />
        </svg>
        <svg width="12" height="12" viewBox="0 0 13.500 14"><WrenchPath stroke="#fff" /></svg>
      </PanelHead>
      <Offer>
        Offre
        <svg width="10" height="7"><path d="M0 2.500h6V0l4 3.500L6 7V4.500H0z" fill="#4a93e8" /></svg>
        0
      </Offer>
    </Panel>
  );
}

/* ---------- windows ---------- */

const rsiTicks = [[6, '100', true], [26, '80'], [47, '60'], [67, '40'], [88, '20']];
const rsiMinor = [16, 37, 57, 77, 98];
const rsiTicksLow = [[6, '100', true], [23, '80'], [40, '60'], [57, '40'], [74, '20']];
const rsiMinorLow = [15, 31, 49, 66, 83];

const nasdaqWindow = {
  symbol: 'NASDAQ', price: '8 496,8 (+1,70%)', time: '06:32:42', name: 'US Tech 100 Cash (1€)',
  range: 'Jour :+Haut 8 561,6 +Bas 8 315,7', data: nasdaq, priceH: 430, rsiH: 114, axisW: 46,
  bar: true, thumb: 70, fitOn: true,
  ticks: [[41, '8 550'], [84, ''], [127, '8 450'], [170, '8 400'], [213, '8 350'], [257, '8 300'], [300, '8 250'], [343, '8 200'], [386, '8 150']],
  tags: [{ y: 77, text: '12m17s', kind: 'live', w: 42 }],
  rsiLevels: [32, 82], rsiTicks, rsiMinor, rsiTags: [{ y: 45, text: '53,608', w: 37 }],
  times: [[57, '06:00'], [109, '08:00'], [160, '10:00'], [212, '12:00'], [264, '14:00'], [316, '16:00'], [367, '18:00'], [419, '20:00'], [477, 'mars', true], [529, '02:00'], [581, '04:00'], [632, '06:00']],
};

const daxWindow = {
  symbol: 'DAX', price: '11 987,0 (+2,02%)', time: '07:32:42', name: 'Allemagne 30 Cash (1€)',
  range: 'Jour :+Haut 12 059,5 +Bas 11 742,1', data: dax, priceH: 428, rsiH: 114, axisW: 59, runsOut: true,
  levels: [
    { y: 13, dash: '5 4', names: ['Ouv (J, Pré)'] },
    { y: 52, dash: '5 4', names: ['Clo (J, Pré)'] },
    { y: 104, dash: '12 12', color: '#1a6cf0' },
    { y: 122, names: ['Piv J'] },
    { y: 230, w: 3, color: '#058205', names: ['mS1 M', 'mS1 H'] },
    { y: 338, color: '#058205', names: ['S1 J'] },
    { y: 408, w: 3, names: ['Bas (J, Pré)', 'Bas (H, Pré)'] },
  ],
  ticks: [[32, '12 050'], [89, '12 000', true], [147, '11 950'], [204, '11 900'], [261, '11 850'], [319, '11 800'], [376, '11 750']],
  tags: [{ y: 103, text: '11 987,0', kind: 'price', w: 53 }, { y: 88, text: '12m17s', kind: 'live', w: 42 }, { y: 400, text: '11 722,5', w: 50 }],
  rsiLevels: [32, 82], rsiTicks, rsiMinor, rsiTags: [{ y: 47, text: '51,822', w: 37 }],
  times: [[37, '11:00'], [89, '13:00'], [140, '15:00'], [191, '17:00'], [242, '19:00'], [294, '21:00'], [345, 'mars', true], [396, '03:00'], [447, '05:00'], [499, '07:00'], [550, '09:00'], [601, '11:00']],
};

const dowWindow = {
  symbol: 'DOW', price: '25 557,6 (+1,79%)', time: '06:32:42', name: 'Wall Street Cash (1€)',
  range: 'Jour :+Haut 25 718,1 +Bas 25 057,6', data: dow, priceH: 366, rsiH: 97, axisW: 47, runsOut: true,
  bar: true, thumb: 85,
  ticks: [[21, '26 000', true], [71, '25 800'], [121, '25 600'], [171, '25 400'], [221, '25 200'], [271, '25 000', true], [321, '24 800']],
  tags: [{ y: 122, text: '12m18s', kind: 'live', w: 42 }],
  rsiLevels: [27, 70], rsiTicks: rsiTicksLow, rsiMinor: rsiMinorLow, rsiTags: [{ y: 38, text: '54,248', w: 37 }],
  times: [[37, '28', true], [80, '02:00'], [123, '04:00'], [166, '06:00'], [209, '08:00'], [252, '10:00'], [295, '12:00'], [338, '14:00'], [381, '16:00'], [424, '18:00'], [467, '20:00'], [510, 'mars', true], [553, '02:00'], [596, '04:00'], [639, '06:00']],
};

const topStrip = {
  width: 27, plotW: 0, priceH: 430, rsiH: 114, bar: true, end: 15, rsiEnd: 6,
  ticks: [[9, '800'], [57, '600'], [105, '400'], [152, '200'], [199, '000', true], [248, '800'], [296, '600'], [343, '400'], [391, '200']],
  tags: [{ y: 312, text: '1h27m', kind: 'live', x: -14, w: 36 }],
  rsiLevels: [], rsiTicks: [[6, '100', true]],
  rsiTags: [{ y: 50, text: '48,675', x: -14, w: 37 }],
};

const middleStrip = {
  width: 84, plotW: 22, priceH: 428, rsiH: 114,
  lines: [[19.5, '#000', 3], [67, '#f00', 2], [110, '#f00', 2], [161.5, '#f00', 1], [185, '#f00', 2], [222.5, '#f00', 1], [259, '#000', 4], [284, '#000', 2], [358.5, '#1a6cf0', 1, true], [378, '#058205', 2], [407.5, '#000', 3]],
  ticks: [[26, '13 800'], [63, '13 600'], [99, '13 400'], [136, '13 200'], [173, '13 000', true], [210, '12 800'], [246, '12 600'], [283, '12 400'], [320, '12 200'], [357, '12 000', true], [393, '11 800']],
  tags: [{ y: 358, text: '11 987,0', kind: 'price', w: 54 }, { y: 343, text: '1h27m', kind: 'live', w: 36 }],
  rsiLevels: [31, 81], rsiTicks, rsiMinor, rsiTags: [{ y: 57, text: '41,905', w: 37 }],
};

const bottomStrip = {
  width: 84, plotW: 35, priceH: 366, rsiH: 97, bar: true,
  ticks: [[14, '29 500'], [49, '29 000'], [83, '28 500'], [118, '28 000'], [153, '27 500'], [188, '27 000'], [222, '26 500'], [257, '26 000'], [292, ''], [326, '25 000', true]],
  tags: [{ y: 280, text: '1h27m', kind: 'live', w: 36 }],
  rsiLevels: [26, 69], rsiTicks: rsiTicksLow, rsiMinor: rsiMinorLow, rsiTags: [{ y: 46, text: '44,116', w: 37 }],
};

export default function App() {
  return (
    <Desktop>
      <GlobalStyle />
      <Row $cut>
        <StripWindow s={topStrip} />
        <Splitter />
        <ChartWindow w={nasdaqWindow} />
        <Splitter />
        <OrderPanel />
      </Row>
      <Taskline />
      <Row>
        <StripWindow s={middleStrip} />
        <Splitter />
        <ChartWindow w={daxWindow} />
      </Row>
      <Row>
        <StripWindow s={bottomStrip} />
        <Splitter />
        <ChartWindow w={dowWindow} />
      </Row>
      <Taskline $last />
    </Desktop>
  );
}
